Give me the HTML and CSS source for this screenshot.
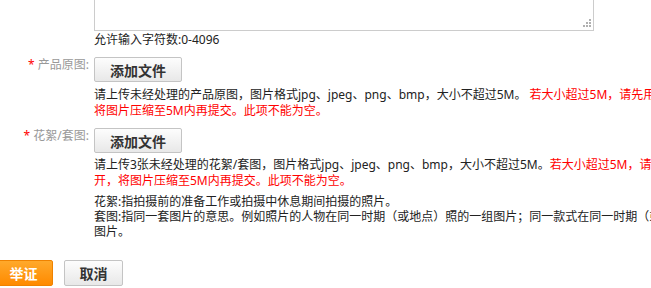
FILE: index.html
```html
<!DOCTYPE html>
<html lang="zh-CN">
<head>
<meta charset="utf-8">
<title>举证</title>
<link rel="stylesheet" href="styles.css">
</head>
<body>
<div class="form">
  <div class="row">
    <div class="label"></div>
    <div class="field">
      <div class="ta-wrap">
        <textarea class="ta"></textarea>
        <span class="grip"><i></i><i></i><i></i><i></i><i></i><i></i></span>
      </div>
      <div class="count">允许输入字符数:0-4096</div>
    </div>
  </div>

  <div class="row upload-row">
    <div class="label"><span class="req">*</span> 产品原图:</div>
    <div class="field">
      <button class="btn btn-file" type="button">添加文件</button>
      <p class="desc">请上传未经处理的产品原图，图片格式jpg、jpeg、png、bmp，大小不超过5M。 <span class="warn">若大小超过5M，请先用图片处理软件打开，将图片压缩至5M内再提交。此项不能为空。</span></p>
    </div>
  </div>

  <div class="row upload-row">
    <div class="label"><span class="req">*</span> 花絮/套图:</div>
    <div class="field">
      <button class="btn btn-file" type="button">添加文件</button>
      <p class="desc desc-tight">请上传3张未经处理的花絮/套图，图片格式jpg、jpeg、png、bmp，大小不超过5M。<span class="warn">若大小超过5M，请先用图片处理软件打开，将图片压缩至5M内再提交。此项不能为空。</span></p>
      <p class="note">花絮:指拍摄前的准备工作或拍摄中休息期间拍摄的照片。<br>套图:指同一套图片的意思。例如照片的人物在同一时期（或地点）照的一组图片；同一款式在同一时期（或地点）所拍摄的一组图片。</p>
    </div>
  </div>

  <div class="actions">
    <button class="btn btn-submit" type="button">举证</button>
    <button class="btn btn-cancel" type="button">取消</button>
  </div>
</div>
</body>
</html>
```

FILE: styles.css
```css
html, body {
  margin: 0;
  padding: 0;
  overflow: hidden;
  background: #fff;
}

body {
  font-family: "Noto Sans", "Noto Sans CJK SC", sans-serif;
  font-size: 12px;
  color: #222;
}

.form {
  margin-top: -70px;
}

.row {
  display: flex;
  gap: 5px;
}

.label {
  flex: none;
  width: 89px;
  text-align: right;
  color: #999;
  line-height: 16px;
  white-space: nowrap;
}

.req {
  color: #f00;
}

.field {
  flex: none;
  width: 676px;
}

.ta-wrap {
  position: relative;
  width: 500px;
  height: 101px;
}

.ta {
  display: block;
  box-sizing: border-box;
  width: 500px;
  height: 101px;
  margin: 0;
  border: 1px solid #ccc;
  resize: none;
  outline: none;
}

.grip {
  position: absolute;
  right: 3px;
  bottom: 4px;
  width: 8px;
  height: 8px;
}

.grip i {
  position: absolute;
  width: 2px;
  height: 2px;
  background: #b0b0b0;
}

.grip i:nth-child(1) { left: 6px; top: 0; }
.grip i:nth-child(2) { left: 3px; top: 3px; }
.grip i:nth-child(3) { left: 6px; top: 3px; }
.grip i:nth-child(4) { left: 0; top: 6px; }
.grip i:nth-child(5) { left: 3px; top: 6px; }
.grip i:nth-child(6) { left: 6px; top: 6px; }

.count {
  margin-top: 1px;
  line-height: 16px;
}

.upload-row {
  margin-top: 9px;
}

.btn {
  display: block;
  box-sizing: border-box;
  margin: 0;
  padding: 0;
  font-family: "Noto Sans", "Noto Sans CJK SC", sans-serif;
  font-size: 14px;
  font-weight: bold;
  border-radius: 2px;
  cursor: pointer;
}

.btn-file,
.btn-cancel {
  color: #333;
  border: 1px solid #c4c4c4;
  background: linear-gradient(#fdfdfd, #e8e8e8);
}

.btn-file {
  width: 88px;
  height: 25px;
}

.desc {
  margin: 5px 0 0;
  line-height: 16px;
}

.desc-tight {
  margin-top: 4px;
}

.warn {
  color: #f00;
}

.note {
  margin: 5px 0 0;
  line-height: 15px;
}

.actions {
  display: flex;
  gap: 11px;
  margin-top: 21px;
  margin-left: -6px;
}

.btn-submit,
.btn-cancel {
  width: 59px;
  height: 26px;
}

.btn-submit {
  color: #fff;
  border: 1px solid #ef8200;
  background: linear-gradient(#ffa92b, #ff8a00);
}
```
